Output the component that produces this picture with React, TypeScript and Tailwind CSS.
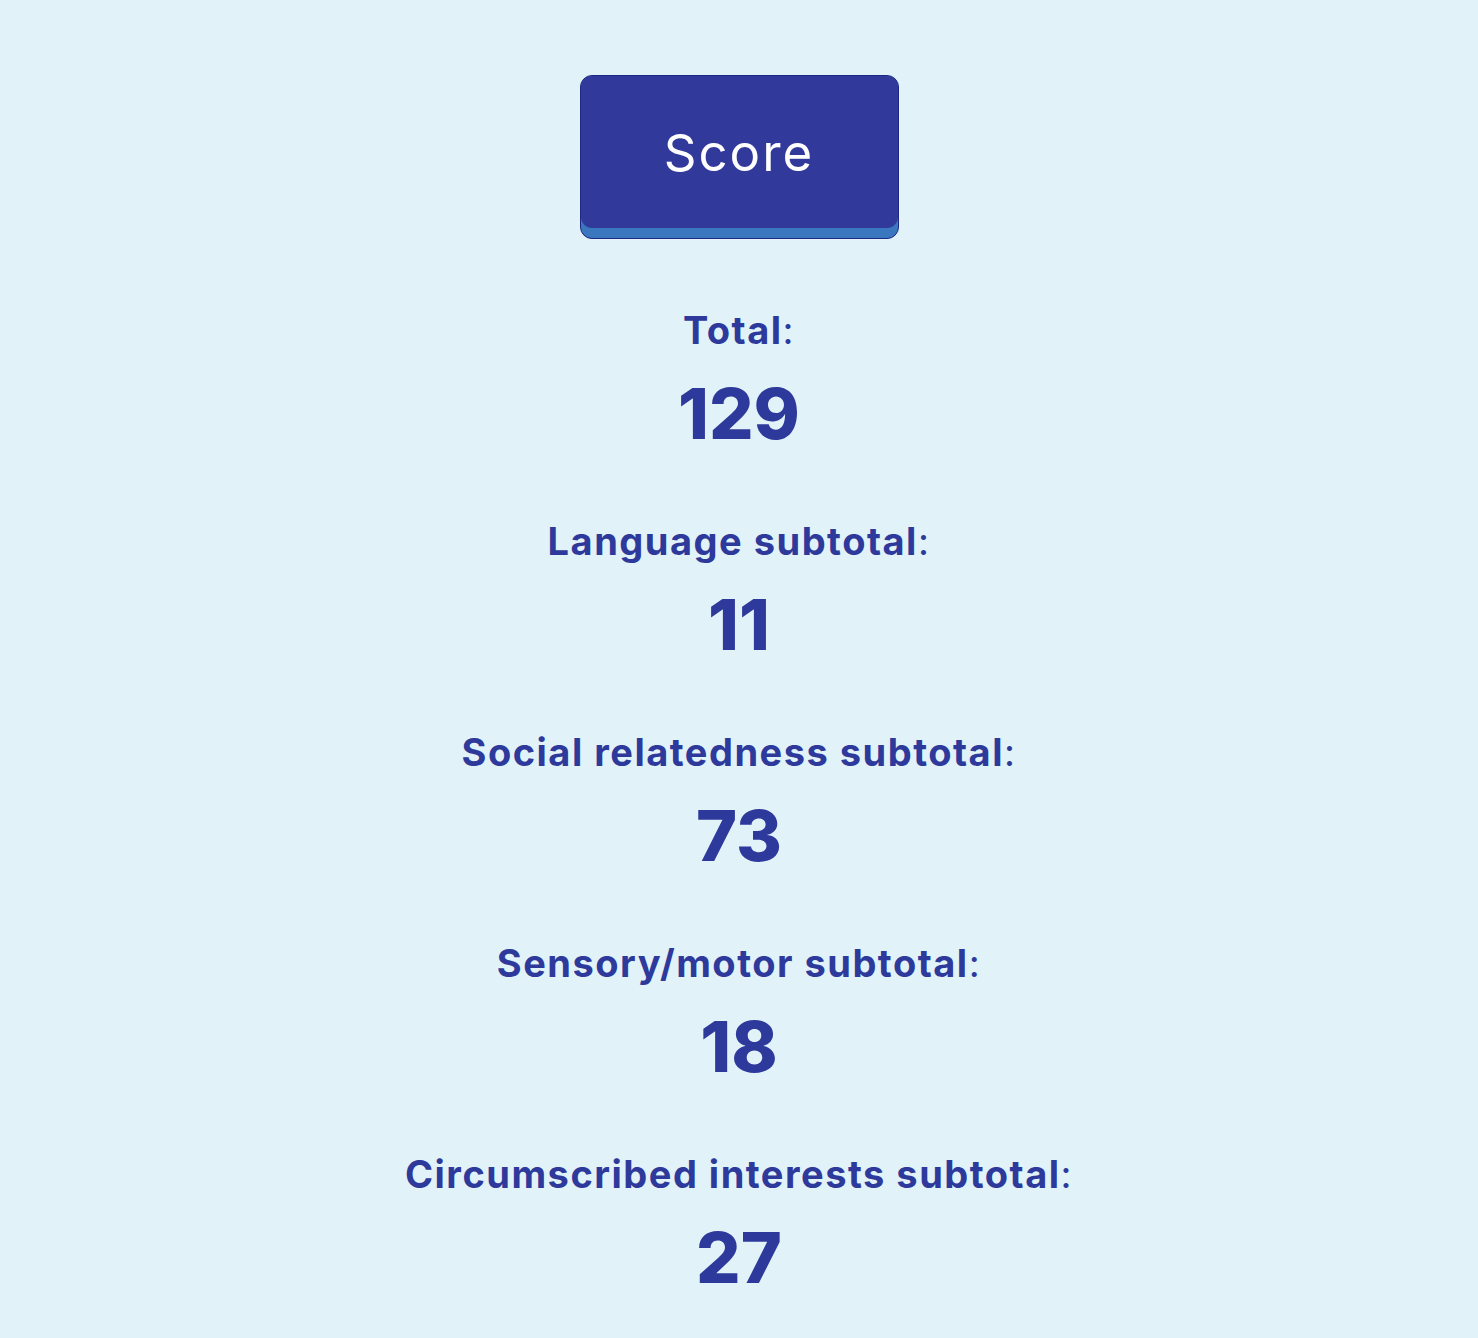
import React from 'react'

const scores = [
  { label: 'Total', value: 129 },
  { label: 'Language subtotal', value: 11 },
  { label: 'Social relatedness subtotal', value: 73 },
  { label: 'Sensory/motor subtotal', value: 18 },
  { label: 'Circumscribed interests subtotal', value: 27 },
]

export default function App() {
  return (
    <div className="min-h-[1338px] bg-[#e1f2f9] flex flex-col items-center pt-[75px] font-['Inter',sans-serif] text-[#2e3a9b]">
      <button
        type="button"
        className="w-[319px] h-[164px] rounded-[12px] border border-[#1d2882] bg-[#3b77bf] pb-[10px]"
      >
        <div className="h-full w-full rounded-[11px] bg-[#31399a] flex items-center justify-center text-white text-[51px] tracking-[2px] pt-[2px]">
          Score
        </div>
      </button>

      <div className="mt-[71px] flex flex-col items-center gap-[67px]">
        {scores.map((s) => (
          <div key={s.label} className="flex flex-col items-center gap-[24px]">
            <p className="text-[38px] leading-[40px] font-bold tracking-[1.5px]">
              {s.label}
              <span className="font-normal">:</span>
            </p>
            <p className="text-[70px] leading-[80px] font-extrabold">{s.value}</p>
          </div>
        ))}
      </div>
    </div>
  )
}
